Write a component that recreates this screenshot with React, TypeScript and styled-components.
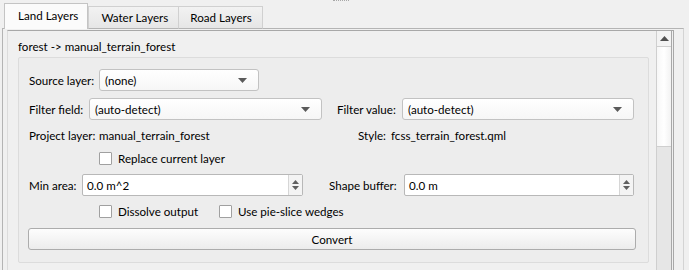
import React from 'react'
import styled, { createGlobalStyle } from 'styled-components'

const GlobalStyle = createGlobalStyle`
  html, body {
    margin: 0;
    padding: 0;
    background: #f0f0f0;
  }
  body {
    font-family: Lato, 'Noto Sans', sans-serif;
    font-size: 11.6px;
    color: #000;
  }
`

const tabs = ['Land Layers', 'Water Layers', 'Road Layers']

const ComboArrow: React.FC = () => (
  <svg width='9' height='5' viewBox='0 0 9 5'>
    <path d='M0 0 L9 0 L4.5 5 Z' fill='#5a5a5a' />
  </svg>
)

const ComboBox: React.FC<{ value: string, width?: number }> = ({ value, width }) => (
  <Combo $width={width}>
    <span>{value}</span>
    <ComboArrow />
  </Combo>
)

const SpinBox: React.FC<{ value: string }> = ({ value }) => (
  <Spin>
    <SpinText>{value}</SpinText>
    <SpinButtons>
      <svg width='7' height='4' viewBox='0 0 7 4'><path d='M0 4 L7 4 L3.5 0 Z' fill='#606060' /></svg>
      <svg width='7' height='4' viewBox='0 0 7 4'><path d='M0 0 L7 0 L3.5 4 Z' fill='#606060' /></svg>
    </SpinButtons>
  </Spin>
)

const CheckBox: React.FC<{ label: string, width?: number }> = ({ label, width }) => (
  <Check $width={width}>
    <CheckSquare />
    <span>{label}</span>
  </Check>
)

const App: React.FC = () => {
  return (
    <>
      <GlobalStyle />
      <Window>
        <HandleRow>
          <Dots />
        </HandleRow>
        <TabBar>
          {tabs.map((tab, index) => (
            <Tab key={tab} $active={index === 0}>{tab}</Tab>
          ))}
        </TabBar>
        <Pane>
          <ScrollArea>
            <Viewport>
              <Title>forest -&gt; manual_terrain_forest</Title>
              <Group>
                <Row $top={0}>
                  <Label $width={70}>Source layer:</Label>
                  <ComboBox value='(none)' width={160} />
                </Row>
                <Row $top={7}>
                  <Half $width={293}>
                    <Label $width={60}>Filter field:</Label>
                    <ComboBox value='(auto-detect)' />
                  </Half>
                  <Half $width={297} $gap={15}>
                    <Label $width={65}>Filter value:</Label>
                    <ComboBox value='(auto-detect)' />
                  </Half>
                </Row>
                <Row $top={5} $height={20}>
                  <Label $width={70}>Project layer:</Label>
                  <Value $width={259}>manual_terrain_forest</Value>
                  <Label $width={33}>Style:</Label>
                  <Value>fcss_terrain_forest.qml</Value>
                </Row>
                <Row $top={3} $height={20}>
                  <Indent $width={70} />
                  <CheckBox label='Replace current layer' />
                </Row>
                <Row $top={6}>
                  <Half $width={274}>
                    <Label $width={53}>Min area:</Label>
                    <SpinBox value='0.0 m^2' />
                  </Half>
                  <Half $width={305} $gap={26}>
                    <Label $width={75}>Shape buffer:</Label>
                    <SpinBox value='0.0 m' />
                  </Half>
                </Row>
                <Row $top={5} $height={20}>
                  <Indent $width={70} />
                  <CheckBox label='Dissolve output' width={120} />
                  <CheckBox label='Use pie-slice wedges' />
                </Row>
                <Row $top={7}>
                  <Button>Convert</Button>
                </Row>
              </Group>
            </Viewport>
            <ScrollBar>
              <ArrowButton>
                <svg width='9' height='5' viewBox='0 0 9 5'><path d='M0 5 L9 5 L4.5 0 Z' fill='#505050' /></svg>
              </ArrowButton>
              <Thumb />
              <Track />
            </ScrollBar>
          </ScrollArea>
        </Pane>
      </Window>
    </>
  )
}

const Window = styled.div`
  width: 689px;
  height: 270px;
  overflow: hidden;
  display: flex;
  flex-direction: column;
`

const HandleRow = styled.div`
  height: 3px;
  display: flex;
  padding-left: 333px;
`

const Dots = styled.div`
  width: 16px;
  height: 1px;
  border-top: 1px dotted #a8a8a8;
`

const TabBar = styled.div`
  display: flex;
  align-items: flex-end;
  padding-left: 4px;
  height: 26px;
  position: relative;
  z-index: 1;
  margin-bottom: -1px;
`

const Tab = styled.div<{ $active?: boolean }>`
  box-sizing: border-box;
  height: ${p => p.$active ? 26 : 23}px;
  padding: 0 10px 0 11px;
  display: flex;
  align-items: center;
  border: 1px solid ${p => p.$active ? '#c4c4c4' : '#d0d0d0'};
  border-bottom: ${p => p.$active ? 'none' : '1px solid #b4b4b4'};
  margin-left: ${p => p.$active ? 0 : -1}px;
  background: ${p => p.$active ? '#fbfbfb' : 'linear-gradient(#f2f2f2, #e6e6e6)'};
  &:nth-child(2) { margin-left: 0; padding-left: 12px; }
  &:first-child { padding: 0 9px 2px 13px; }
`

const Pane = styled.div`
  flex: 1;
  margin-left: 2px;
  width: 682px;
  box-sizing: border-box;
  border-top: 1px solid #b4b4b4;
  border-left: 1px solid #b4b4b4;
  border-right: 1px solid #d4d4d4;
  padding: 1px 9px 0 4px;
  display: flex;
`

const ScrollArea = styled.div`
  flex: 1;
  display: flex;
  border-top: 1px solid #a8a8a8;
  border-left: 1px solid #dcdcdc;
  border-right: 1px solid #a8a8a8;
`

const Viewport = styled.div`
  flex: 1;
  display: flex;
  flex-direction: column;
  padding: 0 7px 0 10px;
`

const Title = styled.div`
  height: 26px;
  line-height: 32px;
`

const Group = styled.div`
  box-sizing: border-box;
  height: 206px;
  border: 1px solid #dcdcdc;
  border-radius: 2px;
  background: #ededed;
  padding: 11px 12px 0 10px;
  display: flex;
  flex-direction: column;
`

const Row = styled.div<{ $top: number, $height?: number }>`
  display: flex;
  align-items: center;
  margin-top: ${p => p.$top}px;
  height: ${p => p.$height ?? 22}px;
`

const Half = styled.div<{ $width: number, $gap?: number }>`
  display: flex;
  align-items: center;
  width: ${p => p.$width}px;
  margin-left: ${p => p.$gap ?? 0}px;
  height: 100%;
`

const Label = styled.span<{ $width: number }>`
  flex: 0 0 ${p => p.$width}px;
  white-space: nowrap;
`

const Value = styled.span<{ $width?: number }>`
  ${p => p.$width ? `flex: 0 0 ${p.$width}px;` : ''}
  white-space: nowrap;
`

const Indent = styled.span<{ $width: number }>`
  flex: 0 0 ${p => p.$width}px;
`

const Combo = styled.div<{ $width?: number }>`
  box-sizing: border-box;
  height: 22px;
  ${p => p.$width ? `width: ${p.$width}px;` : 'flex: 1;'}
  border: 1px solid #c2c2c2;
  border-radius: 3px;
  background: linear-gradient(#ffffff, #f6f6f6);
  display: flex;
  align-items: center;
  justify-content: space-between;
  padding: 0 11px 0 5px;
`

const Spin = styled.div`
  flex: 1;
  box-sizing: border-box;
  height: 22px;
  border: 1px solid #b8b8b8;
  border-radius: 2px;
  background: #fff;
  display: flex;
`

const SpinText = styled.span`
  flex: 1;
  display: flex;
  align-items: center;
  padding-left: 4px;
`

const SpinButtons = styled.div`
  width: 13px;
  border-left: 1px solid #d6d6d6;
  background: #f4f4f4;
  display: flex;
  flex-direction: column;
  align-items: center;
  justify-content: center;
  gap: 2px;
`

const Check = styled.label<{ $width?: number }>`
  display: flex;
  align-items: center;
  gap: 6px;
  white-space: nowrap;
  ${p => p.$width ? `flex: 0 0 ${p.$width}px;` : ''}
`

const CheckSquare = styled.span`
  box-sizing: border-box;
  width: 13px;
  height: 13px;
  border: 1px solid #a0a0a0;
  border-radius: 1px;
  background: #fff;
`

const Button = styled.div`
  flex: 1;
  box-sizing: border-box;
  height: 22px;
  margin-left: -1px;
  border: 1px solid #acacac;
  border-radius: 3px;
  background: linear-gradient(#fdfdfd, #ececec);
  display: flex;
  align-items: center;
  justify-content: center;
`

const ScrollBar = styled.div`
  width: 14px;
  display: flex;
  flex-direction: column;
  border-left: 1px solid #cfcfcf;
  border-right: 1px solid #a8a8a8;
  margin-right: 1px;
`

const ArrowButton = styled.div`
  height: 15px;
  display: flex;
  align-items: center;
  justify-content: center;
  background: #f3f3f3;
  border-bottom: 1px solid #cfcfcf;
`

const Thumb = styled.div`
  height: 99px;
  background: linear-gradient(90deg, #f7f7f7, #ffffff, #f2f2f2);
  border-bottom: 1px solid #cfcfcf;
`

const Track = styled.div`
  flex: 1;
  background: #e6e6e6;
`

export default App
